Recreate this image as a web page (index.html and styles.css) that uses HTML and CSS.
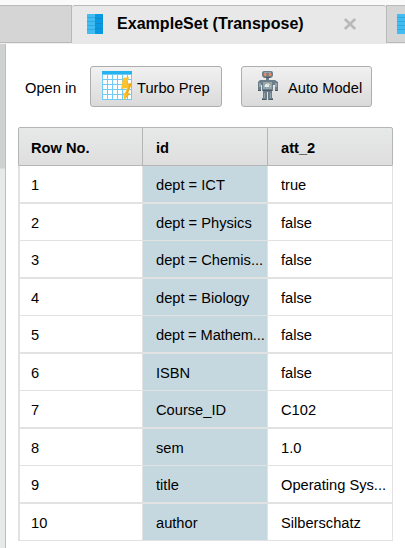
FILE: index.html
```html
<!DOCTYPE html>
<html lang="en">
<head>
<meta charset="utf-8">
<title>ExampleSet (Transpose)</title>
<link rel="stylesheet" href="styles.css">
</head>
<body>
<svg class="defs" width="0" height="0" aria-hidden="true">
  <symbol id="dataset" viewBox="0 0 16 20">
    <path fill="#41bdf3" d="M0 0h8v20H0z"/>
    <path fill="#0799e2" d="M8 0h8v20H8z"/>
    <path stroke="#31a9dc" stroke-width="1" d="M0 3.5h8M0 7.5h8M0 11.5h8M0 15.5h8"/>
    <path stroke="#1689c4" stroke-width="1" d="M8 4.5h8M8 9.5h8M8 14.5h8"/>
  </symbol>
</svg>
<nav class="tabs">
  <div class="tab tab-prev"></div>
  <div class="tab tab-active">
    <svg class="tab-icon" width="16" height="20"><use href="#dataset"/></svg>
    <span class="tab-title">ExampleSet (Transpose)</span>
    <svg class="close" width="14" height="12" viewBox="0 0 14 12"><path d="M1.8 1l10.4 10M12.2 1L1.8 11" stroke="#b9b9b9" stroke-width="2.6"/></svg>
  </div>
  <div class="tab tab-next"><svg class="tab-icon" width="8" height="20" viewBox="0 0 8 20"><use href="#dataset" width="16" height="20"/></svg></div>
</nav>
<main class="content">
  <aside class="rail"><div class="thumb"></div></aside>
  <section class="panel">
    <div class="toolbar">
      <span class="label">Open in</span>
      <button class="button turbo">
        <svg width="30" height="30" viewBox="0 0 30 30">
          <path fill="#6fcbf5" d="M0 0h30v29H0z"/>
          <path fill="#27b2f0" d="M0 0h30v3H0z"/>
          <g fill="#fff">
            <path d="M1 4h4v4H1zM6 4h4v4H6zM11 4h4v4h-4zM16 4h4v4h-4zM21 4h4v4h-4zM26 4h3v4h-3z"/>
            <path d="M1 9h4v4H1zM6 9h4v4H6zM11 9h4v4h-4zM16 9h4v4h-4zM21 9h4v4h-4zM26 9h3v4h-3z"/>
            <path d="M1 14h4v4H1zM6 14h4v4H6zM11 14h4v4h-4zM16 14h4v4h-4zM21 14h4v4h-4zM26 14h3v4h-3z"/>
            <path d="M1 19h4v4H1zM6 19h4v4H6zM11 19h4v4h-4zM16 19h4v4h-4zM21 19h4v4h-4zM26 19h3v4h-3z"/>
            <path d="M1 24h4v4H1zM6 24h4v4H6zM11 24h4v4h-4zM16 24h4v4h-4zM21 24h4v4h-4zM26 24h3v4h-3z"/>
          </g>
          <path fill="#fcc32c" d="M21 7l6-1-2 7 5-1-4 10 2 .5L22 29l-1-7.5 2 .5 2-5-6 1z"/>
          <path fill="#f0a91f" d="M25 13l5-1-4 10 2 .5L22 29l4-6-2-.5 3-8z"/>
        </svg>
        <span>Turbo Prep</span>
      </button>
      <button class="button auto">
        <svg width="22" height="30" viewBox="0 0 22 30">
          <path fill="#6b7e89" d="M5 2q0-2 2-2h7q2 0 2 2v3l-2 2h-2v2h6l3 2v9h-3v-6h-2v6h-1v7h1v2h-5v-8h-1v8H5v-2h1v-7H5v-6H4v6H1v-9l2-2h6V7H7L5 5z"/>
          <path fill="#93a4ac" d="M7 1h7v1H7zM6 11h9v7H6zM2 12h2v4H2zM18 12h2v4h-2zM7 22h1v5H7zM13 22h1v5h-1z"/>
          <circle cx="8.2" cy="3.4" r="1.5" fill="#ee8c63"/>
          <circle cx="13" cy="3.4" r="1.5" fill="#ee8c63"/>
          <path fill="#4a5b66" d="M9 6h4v1H9zM6 19h9v1H6zM1 19h3v1H1zM18 19h3v1h-3zM5 28h4v1H5zM12 28h4v1h-4z"/>
          <path fill="#e2eef0" d="M7.500 16a3 3.500 0 0 1 6 0z"/>
          <path fill="#e5cc69" d="M10 12h1.500v2H10z"/>
          <path fill="#66bbd3" d="M12 14h1v2h-1z"/>
        </svg>
        <span>Auto Model</span>
      </button>
    </div>
    <div class="table">
      <div class="row head"><div>Row No.</div><div>id</div><div>att_2</div></div>
      <div class="row"><div>1</div><div>dept = ICT</div><div>true</div></div>
      <div class="row"><div>2</div><div>dept = Physics</div><div>false</div></div>
      <div class="row"><div>3</div><div>dept = Chemis...</div><div>false</div></div>
      <div class="row"><div>4</div><div>dept = Biology</div><div>false</div></div>
      <div class="row"><div>5</div><div class="tight">dept = Mathem...</div><div>false</div></div>
      <div class="row"><div>6</div><div>ISBN</div><div>false</div></div>
      <div class="row"><div>7</div><div>Course_ID</div><div>C102</div></div>
      <div class="row"><div>8</div><div>sem</div><div>1.0</div></div>
      <div class="row"><div>9</div><div>title</div><div>Operating Sys...</div></div>
      <div class="row"><div>10</div><div>author</div><div>Silberschatz</div></div>
    </div>
  </section>
</main>
</body>
</html>
```
FILE: styles.css
```css
* { box-sizing: border-box; }
body {
  margin: 0;
  height: 548px;
  overflow: hidden;
  display: flex;
  flex-direction: column;
  background: #fff;
  color: #000;
  font: 14.67px/18px "Liberation Sans", Arial, sans-serif;
}
.defs { display: none; }
svg { display: block; flex: none; }

.tabs {
  display: flex;
  align-items: flex-start;
  height: 44px;
  padding-top: 5px;
  background: linear-gradient(#fafafa 38px, #efefef 38px);
  flex: none;
}
.tab {
  display: flex;
  height: 38px;
  border-top: 1px solid #b9b9b9;
  background: #d5d5d5;
  flex: none;
}
.tab-prev {
  width: 72px;
  border-right: 1px solid #b9b9b9;
  border-bottom: 1px solid #b9b9b9;
}
.tab-active {
  width: 314px;
  height: 39px;
  padding-left: 15px;
  background: #e8e8e8;
  border-radius: 3px 3px 0 0;
}
.tab-icon { margin-top: 8px; }
.tab-title {
  margin: 9px 0 0 14px;
  width: 187px;
  font-size: 16px;
  font-weight: bold;
  letter-spacing: 0.04px;
  white-space: nowrap;
}
.close { margin: 12px 0 0 39px; }
.tab-next {
  width: 19px;
  padding-left: 10px;
  border-left: 1px solid #b9b9b9;
  border-bottom: 1px solid #b9b9b9;
}

.content { display: flex; flex: 1; min-height: 0; }
.rail {
  width: 6px;
  background: #e8eae9;
  border-right: 1px solid #bdbdbd;
  flex: none;
}
.thumb { height: 125px; background: #d0d2d1; border-bottom: 1px solid #dcdedd; }
.panel { padding: 22px 0 0 12px; }

.toolbar { display: flex; align-items: center; padding-left: 7px; height: 41px; }
.label { width: 65px; padding-top: 2px; }
.button {
  display: flex;
  align-items: center;
  height: 41px;
  padding: 0;
  border: 1px solid #adadad;
  border-radius: 3px;
  background: linear-gradient(#f1f1f1, #dadada);
  color: #000;
  font: inherit;
  white-space: nowrap;
}
.button svg { margin-bottom: 1px; }
.button span { padding-top: 2px; }
.turbo { width: 132px; padding-left: 11px; gap: 5px; }
.auto { width: 131px; margin-left: 19px; padding-left: 15px; gap: 9px; }

.table { width: 375px; margin-top: 20px; }
.row {
  display: grid;
  grid-template-columns: 125px 125px 125px;
  height: 37px;
  border-bottom: 1px solid #e2e2e2;
}
.row:nth-child(even) { height: 38px; border-bottom-width: 2px; }
.row div {
  padding: 10px 0 0 13px;
  border-right: 1px solid #e2e2e2;
  white-space: nowrap;
}
.row div:first-child { padding-left: 11px; border-left: 2px solid #e2e2e2; }
.row div:nth-child(2) { background: #c6d8df; }
.row .tight { letter-spacing: -0.1px; }
.row.head {
  height: 39px;
  border: 1px solid #b5b5b5;
  border-radius: 2px 2px 0 0;
  grid-template-columns: 124px 125px 124px;
  background: linear-gradient(#e7e9e8, #dedede);
  font-weight: bold;
}
.row.head div { background: none; border-right-color: #b5b5b5; padding-top: 11px; }
.row.head div:first-child { border-left: 0; padding-left: 12px; }
.row.head div:last-child { border-right: 0; }
```
